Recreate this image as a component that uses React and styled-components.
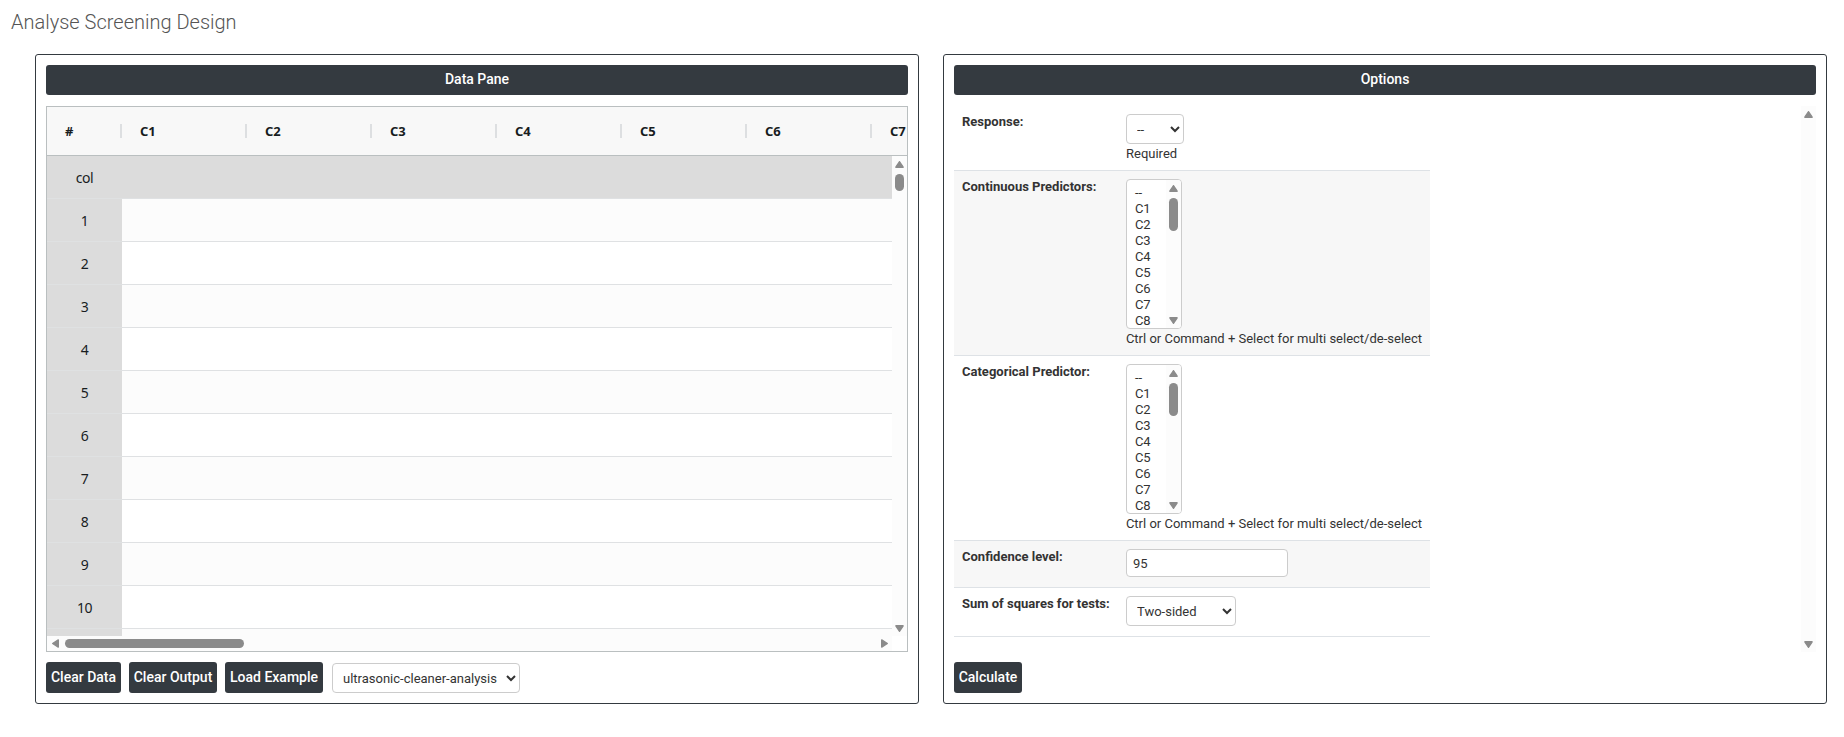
import React from 'react'
import styled, { createGlobalStyle } from 'styled-components'

const columns = ['C1', 'C2', 'C3', 'C4', 'C5', 'C6', 'C7']
const rows = ['col', 1, 2, 3, 4, 5, 6, 7, 8, 9, 10, '']
const listItems = ['--', 'C1', 'C2', 'C3', 'C4', 'C5', 'C6', 'C7', 'C8']

function Arrow({ dir }) {
    const turn = { up: 0, right: 90, down: 180, left: 270 }[dir]
    return (
        <ArrowSvg width="9" height="9" viewBox="0 0 9 9">
            <path
                d="M4.5 1.6 L8.1 6.9 L8.1 7.4 L0.9 7.4 L0.9 6.9 Z"
                fill="#8b8b8b"
                stroke="#8b8b8b"
                strokeWidth="1.2"
                strokeLinejoin="round"
                transform={`rotate(${turn} 4.5 4.5)`}
            />
        </ArrowSvg>
    )
}

function VerticalBar({ thumb }) {
    return (
        <VBar>
            <Arrow dir="up" />
            {thumb && <VThumb $size={thumb} />}
            <Spacer />
            <Arrow dir="down" />
        </VBar>
    )
}

function DataGrid() {
    return (
        <Grid>
            <GridHead>
                <HeadCell $first>#</HeadCell>
                {columns.map((c) => (
                    <HeadCell key={c}>{c}</HeadCell>
                ))}
            </GridHead>
            <GridBody>
                <Rows>
                    {rows.map((r, i) => (
                        <Row key={i} $odd={i % 2 === 1} $grey={i === 0}>
                            <RowNumber>{r}</RowNumber>
                            <RowLine />
                        </Row>
                    ))}
                </Rows>
                <VerticalBar thumb={17} />
            </GridBody>
            <GridFoot>
                <HBar>
                    <Arrow dir="left" />
                    <HThumb />
                    <Spacer />
                    <Arrow dir="right" />
                </HBar>
            </GridFoot>
        </Grid>
    )
}

function ListBox() {
    return (
        <List>
            <ListItems>
                {listItems.map((item) => (
                    <ListItem key={item}>{item}</ListItem>
                ))}
            </ListItems>
            <VerticalBar thumb={33} />
        </List>
    )
}

export default function App() {
    return (
        <Page>
            <GlobalStyle />
            <Title>Analyse Screening Design</Title>
            <Panels>
                <Panel>
                    <PanelTitle>Data Pane</PanelTitle>
                    <DataGrid />
                    <Actions>
                        <Button $width={75}>Clear Data</Button>
                        <Button $width={88}>Clear Output</Button>
                        <Button $width={98}>Load Example</Button>
                        <ExampleSelect $width={188}>
                            <option>ultrasonic-cleaner-analysis</option>
                        </ExampleSelect>
                    </Actions>
                </Panel>
                <Panel>
                    <PanelTitle>Options</PanelTitle>
                    <Options>
                        <Form>
                            <Field $height={65}>
                                <Label>Response:</Label>
                                <Control>
                                    <Select $width={58}>
                                        <option>--</option>
                                    </Select>
                                    <Hint>Required</Hint>
                                </Control>
                            </Field>
                            <Field $height={185} $striped>
                                <Label>Continuous Predictors:</Label>
                                <Control>
                                    <ListBox />
                                    <Hint>Ctrl or Command + Select for multi select/de-select</Hint>
                                </Control>
                            </Field>
                            <Field $height={185}>
                                <Label>Categorical Predictor:</Label>
                                <Control>
                                    <ListBox />
                                    <Hint>Ctrl or Command + Select for multi select/de-select</Hint>
                                </Control>
                            </Field>
                            <Field $height={47} $striped>
                                <Label>Confidence level:</Label>
                                <Control>
                                    <Input defaultValue="95" />
                                </Control>
                            </Field>
                            <Field $height={49}>
                                <Label>Sum of squares for tests:</Label>
                                <Control>
                                    <Select $width={110}>
                                        <option>Two-sided</option>
                                    </Select>
                                </Control>
                            </Field>
                        </Form>
                        <VerticalBar />
                    </Options>
                    <Actions>
                        <Button $width={68}>Calculate</Button>
                    </Actions>
                </Panel>
            </Panels>
        </Page>
    )
}

const GlobalStyle = createGlobalStyle`
* {
    box-sizing: border-box;
}
body {
    margin: 0;
    background: #fff;
    color: #333;
    font-family: Roboto, sans-serif;
    font-size: 13px;
    overflow: hidden;
}
`

const Page = styled.div`
width: 1844px;
height: 737px;
`

const Title = styled.h1`
margin: 0;
height: 54px;
padding: 9px 0 0 11px;
font-size: 20px;
line-height: 26px;
font-weight: 300;
color: #555;
`

const Panels = styled.div`
display: flex;
gap: 24px;
padding-left: 35px;
`

const Panel = styled.section`
display: flex;
flex-direction: column;
width: 884px;
height: 650px;
padding: 10px;
border: 1px solid #343a40;
border-radius: 3px;
`

const PanelTitle = styled.div`
height: 30px;
line-height: 29px;
margin-bottom: 11px;
border-radius: 3px;
background: #343a40;
color: #fff;
font-size: 14px;
font-weight: 500;
text-align: center;
`

const Grid = styled.div`
height: 546px;
border: 1px solid #babfc0;
overflow: hidden;
color: #181d1f;
font-family: "Noto Sans", sans-serif;
`

const GridHead = styled.div`
display: flex;
align-items: center;
height: 49px;
border-bottom: 1px solid #babfc0;
background: #f8f8f8;
overflow: hidden;
`

const HeadCell = styled.div`
flex: none;
width: ${(p) => (p.$first ? 75 : 125)}px;
height: 14px;
line-height: 14px;
padding-left: 18px;
border-right: 2px solid #dddfe1;
font-size: 13px;
font-weight: 700;
`

const GridBody = styled.div`
display: flex;
height: 480px;
`

const Rows = styled.div`
flex: 1;
overflow: hidden;
`

const Row = styled.div`
display: flex;
height: 43px;
background: ${(p) => (p.$grey ? '#dcdcdc' : p.$odd ? '#fcfcfc' : '#fff')};
`

const RowNumber = styled.div`
width: 75px;
line-height: 44px;
border-bottom: 1px solid #dfe1e2;
background: #dcdcdc;
font-size: 14px;
letter-spacing: -0.4px;
text-align: center;
`

const RowLine = styled.div`
flex: 1;
border-bottom: 1px solid #dfe1e3;
`

const VBar = styled.div`
display: flex;
flex-direction: column;
align-items: center;
flex: none;
width: 15px;
padding: 4px 0 3px;
background: #fcfcfc;
`

const VThumb = styled.div`
width: 9px;
height: ${(p) => p.$size}px;
margin-top: 5px;
border-radius: 5px;
background: #8b8b8b;
`

const GridFoot = styled.div`
height: 15px;
padding-right: 15px;
`

const HBar = styled.div`
display: flex;
align-items: center;
height: 15px;
padding: 0 3px 0 4px;
background: #fcfcfc;
`

const HThumb = styled.div`
width: 179px;
height: 9px;
margin-left: 5px;
border-radius: 5px;
background: #8b8b8b;
`

const Spacer = styled.div`
flex: 1;
`

const ArrowSvg = styled.svg`
flex: none;
display: block;
`

const Actions = styled.div`
display: flex;
align-items: flex-end;
gap: 8px;
margin-top: 10px;
`

const Button = styled.button`
width: ${(p) => p.$width}px;
height: 31px;
padding: 0;
border: 0;
border-radius: 3px;
background: #343a40;
color: #fff;
font-family: inherit;
font-size: 14px;
font-weight: 500;
line-height: 31px;
white-space: nowrap;
`

const Select = styled.select`
display: block;
width: ${(p) => p.$width}px;
height: 30px;
padding: 4px 6px;
border: 1px solid #ccc;
border-radius: 4px;
background: #fff;
color: #333;
font-family: inherit;
font-size: 13px;
`

const ExampleSelect = styled(Select)`
margin-left: 1px;
`

const Options = styled.div`
display: flex;
justify-content: space-between;
height: 546px;
`

const Form = styled.div`
width: 476px;
`

const Field = styled.div`
display: flex;
height: ${(p) => p.$height}px;
padding: 8px;
border-bottom: 1px solid #dee2e6;
background: ${(p) => (p.$striped ? '#f7f7f7' : '#fff')};
`

const Label = styled.label`
width: 164px;
line-height: 16px;
font-weight: 700;
`

const Control = styled.div`
white-space: nowrap;
`

const Hint = styled.div`
line-height: 20px;
`

const List = styled.div`
display: flex;
justify-content: space-between;
width: 56px;
height: 150px;
border: 1px solid #ccc;
border-radius: 4px;
background: #fff;
overflow: hidden;
`

const ListItems = styled.div`
padding: 5px 0 0 8px;
`

const ListItem = styled.div`
height: 16px;
line-height: 16px;
`

const Input = styled.input`
display: block;
width: 162px;
height: 28px;
padding: 4px 6px;
border: 1px solid #ccc;
border-radius: 4px;
color: #333;
font-family: inherit;
font-size: 13px;
`
